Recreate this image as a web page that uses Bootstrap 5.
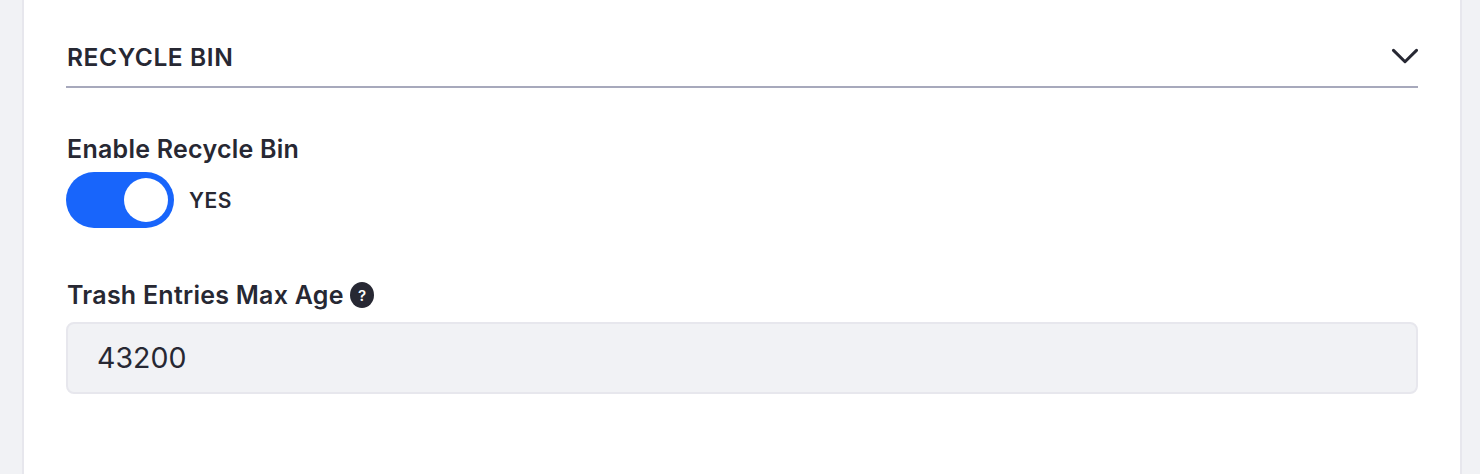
<!DOCTYPE html>
<html lang="en">
<head>
<meta charset="utf-8">
<title>Recycle Bin</title>
<link href="https://cdn.jsdelivr.net/npm/bootstrap@5.3.0/dist/css/bootstrap.min.css" rel="stylesheet">
<style>
body{font-family:Inter,sans-serif;color:#272833;background:#f1f2f5;height:474px;overflow:hidden}
.sheet{margin:0 18px 0 22px;height:474px;border:solid #e7e7ed;border-width:0 2px;padding:40px 42px 0}
.sheet-head{height:48px;border-bottom:2px solid #a7a9bc;padding-left:1px}
.title{font-size:24.5px;line-height:34px;font-weight:600;letter-spacing:.6px;margin:0}
.field-label{font-size:25px;line-height:36px;font-weight:600;letter-spacing:.25px;padding-left:1px}
.enable{margin-top:43px}
.switch-row{margin-top:5px;gap:15px}
.toggle{width:108px;height:56px;border-radius:28px;background:#1865fb;padding:6px}
.knob{width:44px;height:44px;background:#fff;border-radius:50%}
.state{font-size:21px;font-weight:600;line-height:32px;letter-spacing:.5px;padding-top:2px}
.max-age{margin-top:49px}
.help{margin-left:6px}
.value.form-control{height:72px;border:2px solid #e7e7ed;border-radius:8px;background:#f1f2f5;color:#272833;font-size:28.5px;letter-spacing:0;padding:0 30px 1px 29px;margin-top:9px}
</style>
</head>
<body>
<main class="sheet bg-white">
<header class="sheet-head d-flex justify-content-between align-items-start">
<h2 class="title">RECYCLE BIN</h2>
<svg width="28" height="32" viewBox="0 0 28 32" fill="none" stroke="#272833" stroke-width="3" stroke-linecap="round" stroke-linejoin="round"><path d="M3.5 10.4L15 21.7L26.5 10.4"/></svg>
</header>
<section class="enable">
<label class="field-label d-block">Enable Recycle Bin</label>
<div class="switch-row d-flex align-items-center"><div class="toggle d-flex justify-content-end"><span class="knob"></span></div><span class="state">YES</span></div>
</section>
<section class="max-age">
<label class="field-label d-flex align-items-center" for="age">Trash Entries Max Age
<svg class="help" width="24" height="26" viewBox="0 0 24 26"><ellipse cx="12" cy="13" rx="12" ry="13" fill="#272833"/><text x="12" y="18.6" text-anchor="middle" font-size="15" font-weight="600" letter-spacing="0" fill="#fff">?</text></svg></label>
<input id="age" class="form-control value" value="43200">
</section>
</main>
<script src="https://cdn.jsdelivr.net/npm/bootstrap@5.3.0/dist/js/bootstrap.bundle.min.js"></script>
</body>
</html>
